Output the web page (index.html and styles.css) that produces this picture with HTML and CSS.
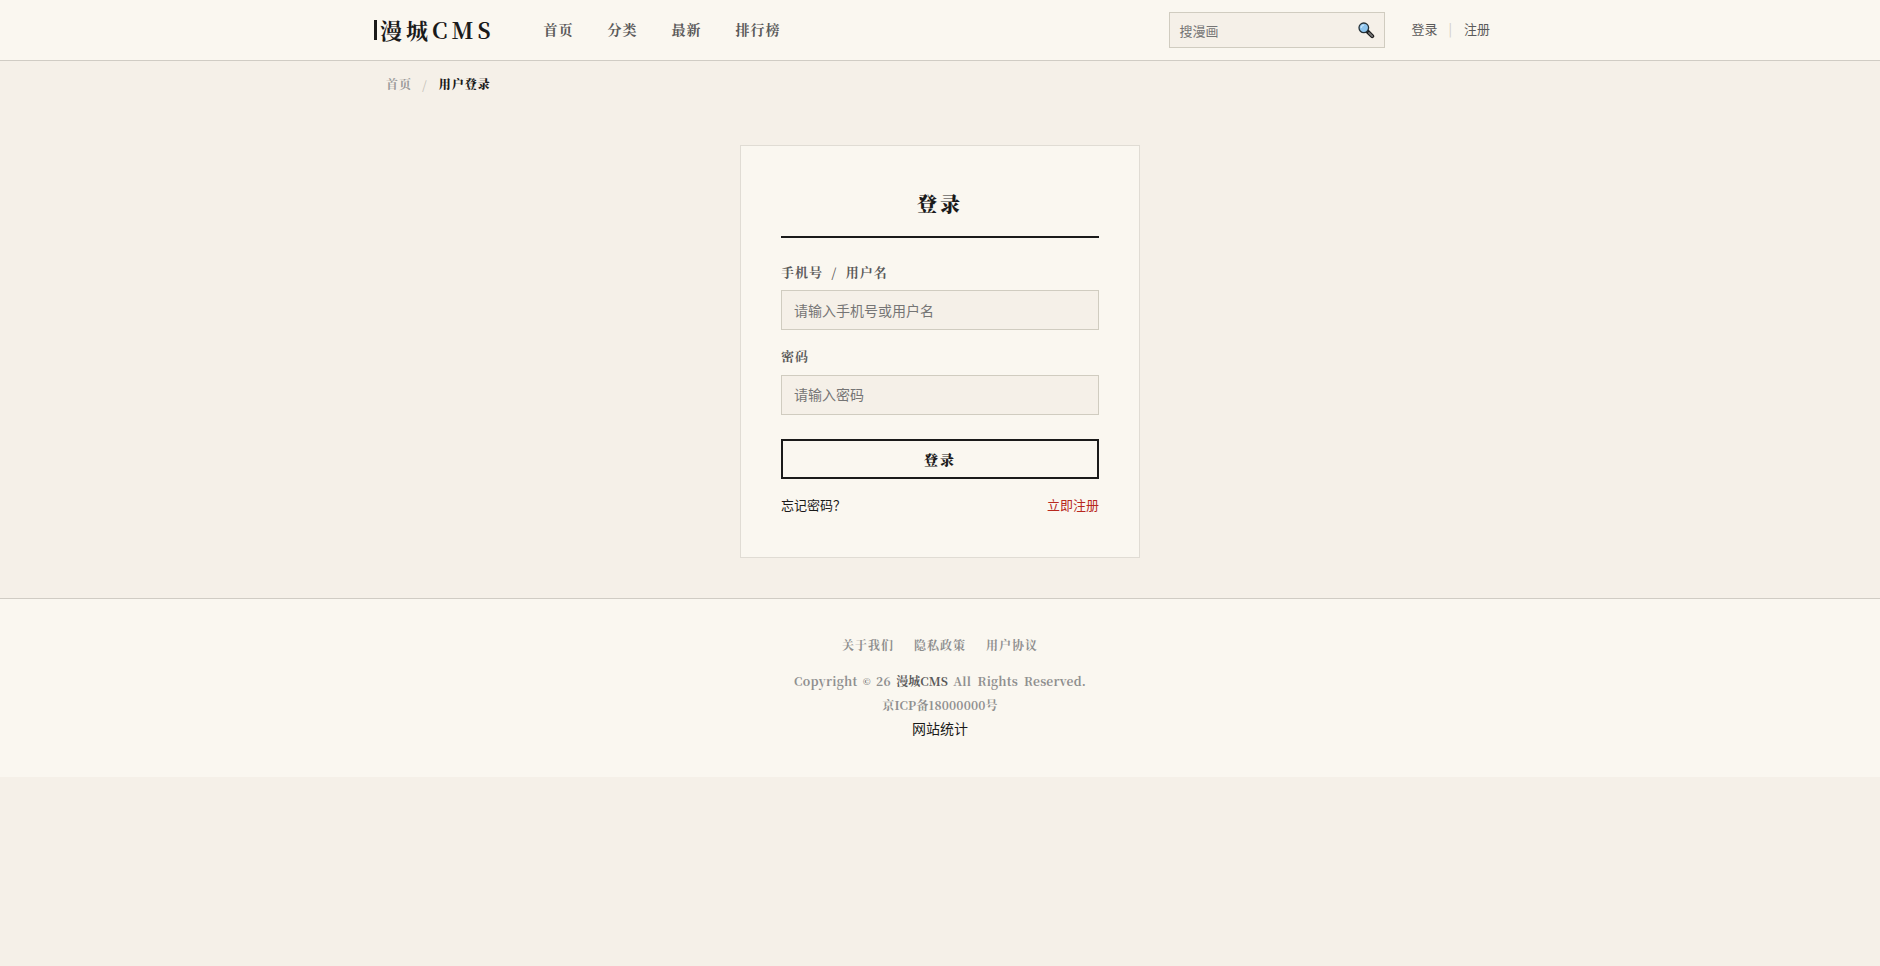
FILE: index.html
```
<!DOCTYPE html>
<html lang="zh-CN">
<head>
    <meta charset="UTF-8">
    <meta name="viewport" content="width=device-width, initial-scale=1.0">
    <title>用户登录 - 漫城CMS</title>
    <link rel="stylesheet" href="styles.css">
</head>
<body>
    <!-- 顶部导航 -->
    <header class="header">
        <div class="header-inner">
            <a class="logo" href="#">漫城CMS</a>
            <nav class="nav">
                <a href="#">首页</a>
                <a href="#">分类</a>
                <a href="#">最新</a>
                <a href="#">排行榜</a>
            </nav>
            <form class="search">
                <input type="text" placeholder="搜漫画">
                <button type="button" aria-label="搜索">
                    <svg width="17" height="17" viewBox="0 0 17 17">
                        <path d="M9.5 9.5L14.2 14.2" stroke="#1c1c1c" stroke-width="4" stroke-linecap="round"/>
                        <path d="M11 11L14.2 14.2" stroke="#777" stroke-width="1.8" stroke-linecap="round"/>
                        <circle cx="5.8" cy="5.8" r="4.8" fill="#8ec5ee" stroke="#263238" stroke-width="1.3"/>
                        <path d="M3.2 6A3 3 0 0 1 6 3.1" fill="none" stroke="#c5e3f8" stroke-width="1.4"/>
                    </svg>
                </button>
            </form>
            <div class="user-links">
                <a href="#">登录</a>
                <span class="line">|</span>
                <a href="#">注册</a>
            </div>
        </div>
    </header>

    <!-- 面包屑 -->
    <div class="breadcrumb">
        <a href="#">首页</a>
        <span class="sep">/</span>
        <span class="current">用户登录</span>
    </div>

    <!-- 登录表单 -->
    <main class="login-card">
        <h1>登录</h1>
        <form>
            <div class="form-group">
                <label for="username">手机号 / 用户名</label>
                <input type="text" id="username" placeholder="请输入手机号或用户名">
            </div>
            <div class="form-group">
                <label for="password">密码</label>
                <input type="password" id="password" placeholder="请输入密码">
            </div>
            <button class="btn-login" type="button">登录</button>
        </form>
        <div class="login-links">
            <a href="#">忘记密码？</a>
            <a class="register" href="#">立即注册</a>
        </div>
    </main>

    <!-- 页脚 -->
    <footer class="footer">
        <div class="footer-links">
            <a href="#">关于我们</a>
            <a href="#">隐私政策</a>
            <a href="#">用户协议</a>
        </div>
        <p class="copyright">Copyright <small>©</small> 26 <a href="#">漫城CMS</a> <span>All Rights Reserved.</span></p>
        <p class="icp">京ICP备18000000号</p>
        <p class="stat">网站统计</p>
    </footer>
</body>
</html>
```
FILE: styles.css
```
* {
    margin: 0;
    padding: 0;
    box-sizing: border-box;
}

body {
    font-family: "Noto Sans CJK SC", sans-serif;
    font-size: 14px;
    line-height: 1.7;
    color: #1a1a1a;
    background-color: #f5f0e8;
}

a {
    color: inherit;
    text-decoration: none;
}

input, button {
    font-family: inherit;
    outline: none;
}

.header {
    background-color: #faf7f0;
    border-bottom: 1px solid #d0ccc4;
}

.header-inner {
    max-width: 1180px;
    height: 60px;
    margin: 0 auto;
    padding: 0 24px;
    display: flex;
    align-items: center;
}

.logo {
    display: flex;
    align-items: center;
    gap: 3px;
    font-family: "Noto Serif CJK SC", "Noto Serif SC", serif;
    font-size: 22px;
    font-weight: 700;
    letter-spacing: 4px;
}

.logo::before {
    content: "";
    width: 3px;
    height: 20px;
    background-color: #1a1a1a;
}

.nav {
    display: flex;
    gap: 34px;
    margin-left: 49px;
    padding-bottom: 1px;
    font-family: "Noto Serif CJK SC", "Noto Serif SC", serif;
    font-weight: 700;
    letter-spacing: 1px;
    color: #5a5a5a;
}

.search {
    display: flex;
    align-items: center;
    width: 216px;
    height: 36px;
    margin-left: auto;
    border: 1px solid #d0ccc0;
    background-color: #f5f0e8;
}

.search input {
    flex: 1;
    min-width: 0;
    padding: 0 10px 0 9px;
    border: none;
    background: none;
    font-size: 13px;
}

.search button {
    display: flex;
    width: 26px;
    padding-top: 1px;
    border: none;
    background: none;
}

.user-links {
    display: flex;
    margin-left: 26px;
    padding: 0 16px 1px 0;
    font-size: 13px;
    color: #5a5a5a;
}

.user-links .line {
    margin: 0 12px 0 11px;
    color: #d0ccc4;
}

.breadcrumb {
    max-width: 1180px;
    margin: 0 auto;
    padding: 13px 36px 11px;
    display: flex;
    gap: 10px;
    font-family: "Noto Serif CJK SC", "Noto Serif SC", serif;
    font-size: 12px;
    font-weight: 700;
    letter-spacing: 1px;
    color: #999;
}

.breadcrumb .sep {
    margin-right: 1px;
    color: #c4c0b8;
}

.breadcrumb .current {
    font-weight: 900;
    color: #1a1a1a;
}

.login-card {
    width: 400px;
    height: 413px;
    margin: 40px auto;
    padding: 40px;
    border: 1px solid #e0dcd4;
    background-color: #faf7f0;
}

.login-card h1 {
    height: 52px;
    margin-bottom: 23px;
    padding-top: 1px;
    border-bottom: 2px solid #1a1a1a;
    font-family: "Noto Serif CJK SC", "Noto Serif SC", serif;
    font-size: 20px;
    font-weight: 900;
    letter-spacing: 3px;
    text-align: center;
}

.form-group {
    margin-bottom: 15px;
}

.form-group label {
    display: block;
    margin-bottom: 7px;
    font-family: "Noto Serif CJK SC", "Noto Serif SC", serif;
    font-size: 13px;
    font-weight: 700;
    letter-spacing: 1px;
    word-spacing: 4px;
    color: #5a5a5a;
}

.form-group input {
    display: block;
    width: 100%;
    height: 40px;
    padding: 0 12px 1px;
    border: 1px solid #d0ccc0;
    background-color: #f5f0e8;
    font-size: 14px;
}

.btn-login {
    display: block;
    width: 100%;
    height: 40px;
    margin-top: 24px;
    border: 2px solid #1a1a1a;
    background: none;
    color: #1a1a1a;
    font-family: "Noto Serif CJK SC", "Noto Serif SC", serif;
    font-size: 14px;
    font-weight: 900;
    letter-spacing: 2px;
}

.login-links {
    display: flex;
    justify-content: space-between;
    margin-top: 15px;
    font-size: 13px;
}

.login-links .register {
    color: #b8281e;
}

.footer {
    height: 179px;
    padding: 34px 0;
    border-top: 1px solid #d0ccc4;
    background-color: #faf7f0;
    text-align: center;
}

.footer-links {
    display: flex;
    justify-content: center;
    gap: 20px;
    margin-bottom: 12px;
    letter-spacing: 1px;
}

.footer-links, .copyright, .icp {
    font-family: "Noto Serif CJK SC", "Noto Serif SC", serif;
    font-size: 12px;
    line-height: 24px;
    font-weight: 700;
    color: #8f8f8f;
}

.copyright {
    letter-spacing: 0.3px;
    word-spacing: 2px;
}

.copyright small {
    font-size: 9px;
    line-height: 1;
    vertical-align: 1px;
    color: #666;
}

.copyright a {
    letter-spacing: 0;
    color: #5a5a5a;
}

.copyright span {
    letter-spacing: 0.2px;
    word-spacing: 3px;
}

.icp {
    letter-spacing: 0.2px;
}
```
